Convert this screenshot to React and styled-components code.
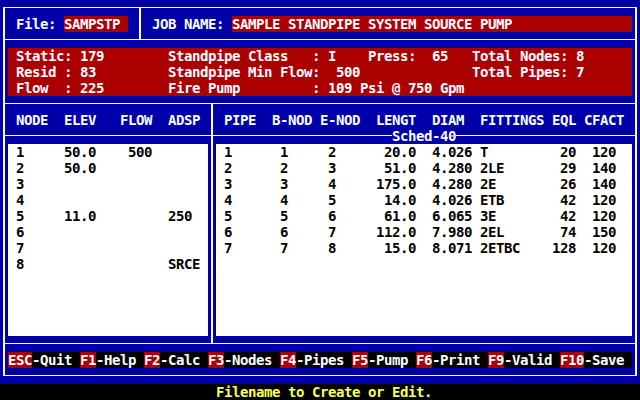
import React from "react";
import styled, { createGlobalStyle } from "styled-components";

const BLUE = "#0000aa";
const RED = "#aa0000";
const WHITE = "#ffffff";
const CH = 8;

const GlobalStyle = createGlobalStyle`
  html, body {
    margin: 0;
    padding: 0;
    background: ${BLUE};
  }
  * {
    box-sizing: border-box;
  }
`;

const leftCols = [{ w: 6 }, { w: 7 }, { w: 6, pad: 4 }, { w: 4 }];
const leftHead = ["NODE", "ELEV", "FLOW", "ADSP"];
const nodes = [
  ["1", "50.0", "500", ""],
  ["2", "50.0", "", ""],
  ["3", "", "", ""],
  ["4", "", "", ""],
  ["5", "11.0", "", "250"],
  ["6", "", "", ""],
  ["7", "", "", ""],
  ["8", "", "", "SRCE"],
];

const rightCols = [
  { w: 6 },
  { w: 6, pad: 2 },
  { w: 5, pad: 2 },
  { w: 7, pad: 7 },
  { w: 8, pad: 7 },
  { w: 8 },
  { w: 5, pad: 4 },
  { w: 5, pad: 4 },
];
const rightHead = ["PIPE", "B-NOD", "E-NOD", "  LENGT", "  DIAM", "FITTINGS", " EQL", "CFACT"];
const pipes = [
  ["1", "1", "2", "20.0", "4.026", "T", "20", "120"],
  ["2", "2", "3", "51.0", "4.280", "2LE", "29", "140"],
  ["3", "3", "4", "175.0", "4.280", "2E", "26", "140"],
  ["4", "4", "5", "14.0", "4.026", "ETB", "42", "120"],
  ["5", "5", "6", "61.0", "6.065", "3E", "42", "120"],
  ["6", "6", "7", "112.0", "7.980", "2EL", "74", "150"],
  ["7", "7", "8", "15.0", "8.071", "2ETBC", "128", "120"],
];

const keys = [
  ["ESC", "-Quit"],
  ["F1", "-Help"],
  ["F2", "-Calc"],
  ["F3", "-Nodes"],
  ["F4", "-Pipes"],
  ["F5", "-Pump"],
  ["F6", "-Print"],
  ["F9", "-Valid"],
  ["F10", "-Save"],
];

const Screen = styled.div`
  width: 640px;
  height: 400px;
  background: ${BLUE};
  color: ${WHITE};
  font-family: "DejaVu Sans Mono", "Liberation Mono", monospace;
  font-weight: bold;
  font-size: 14px;
  letter-spacing: -0.43px;
  line-height: 16px;
  white-space: pre;
  display: flex;
  flex-direction: column;
  overflow: hidden;
`;

const Frame = styled.div`
  margin: 7px 3px 8px;
  height: 369px;
  border: solid ${WHITE};
  border-width: 1px 2px;
  display: flex;
  flex-direction: column;
`;

const HeaderRow = styled.div`
  display: flex;
  height: 32px;
  border-bottom: 1px solid ${WHITE};
`;

const FileCell = styled.div`
  width: 136px;
  border-right: 2px solid ${WHITE};
  padding: 8px 0 0 11px;
  display: flex;
`;

const JobCell = styled.div`
  flex: 1;
  padding: 8px 3px 0 11px;
  display: flex;
`;

const Field = styled.span`
  background: ${RED};
  height: 16px;
  width: ${(p) => (p.$chars ? `${p.$chars * CH}px` : "auto")};
  flex: ${(p) => (p.$chars ? "none" : 1)};
`;

const InfoArea = styled.div`
  height: 64px;
  padding: 8px 3px 7px;
  border-bottom: 1px solid ${WHITE};
`;

const InfoBlock = styled.div`
  background: ${RED};
  height: 48px;
  padding-left: ${CH}px;
  display: grid;
  grid-template-columns: ${19 * CH}px ${38 * CH}px 1fr;
`;

const InfoColumn = styled.div`
  display: flex;
  flex-direction: column;
`;

const Middle = styled.div`
  display: flex;
  height: 240px;
  border-bottom: 1px solid ${WHITE};
`;

const Panel = styled.div`
  width: ${(p) => (p.$width ? `${p.$width}px` : "auto")};
  flex: ${(p) => (p.$width ? "none" : 1)};
  border-right: ${(p) => (p.$divider ? `2px solid ${WHITE}` : "none")};
  padding-top: 8px;
  display: flex;
  flex-direction: column;
`;

const TableRow = styled.div`
  display: grid;
  grid-template-columns: ${(p) => p.$cols.map((c) => `${c.w * CH}px`).join(" ")};
  height: 16px;
  padding-left: ${(p) => p.$indent}px;
`;

const Rule = styled.div`
  display: flex;
  height: 16px;
`;

const RuleLine = styled.div`
  flex: 1;
  height: 1px;
  margin-top: 7px;
  background: ${WHITE};
`;

const RuleLabel = styled.span`
  color: ${WHITE};
`;

const Sheet = styled.div`
  margin: 0 3px;
  height: 192px;
  background: ${WHITE};
  color: #000;
  display: flex;
  flex-direction: column;
`;

const Footer = styled.div`
  padding: 8px 3px 7px;
`;

const KeyBar = styled.div`
  display: flex;
  height: 16px;
  background: #000;
`;

const Key = styled.span`
  background: ${RED};
  color: ${WHITE};
`;

const KeyLabel = styled.span`
  color: ${WHITE};
`;

const StatusLine = styled.div`
  height: 16px;
  background: #000;
  color: #ffff55;
  padding-left: ${CH}px;
  text-align: center;
`;

const fmt = (col, v) => (col.pad ? v.padStart(col.pad) : v);

const Table = ({ cols, head, rows, rule }) => (
  <>
    <TableRow $cols={cols} $indent={11}>
      {head.map((h, i) => (
        <span key={i}>{h}</span>
      ))}
    </TableRow>
    <Rule>
      <RuleLine />
      {rule && <RuleLabel>{rule}</RuleLabel>}
      {rule && <RuleLine />}
    </Rule>
    <Sheet>
      {rows.map((r, i) => (
        <TableRow key={i} $cols={cols} $indent={8}>
          {r.map((v, j) => (
            <span key={j}>{v ? fmt(cols[j], v) : ""}</span>
          ))}
        </TableRow>
      ))}
    </Sheet>
  </>
);

export default function App() {
  return (
    <>
      <GlobalStyle />
      <Screen>
        <Frame>
          <HeaderRow>
            <FileCell>
              <span>File: </span>
              <Field $chars={8}>SAMPSTP</Field>
            </FileCell>
            <JobCell>
              <span>JOB NAME: </span>
              <Field>SAMPLE STANDPIPE SYSTEM SOURCE PUMP</Field>
            </JobCell>
          </HeaderRow>

          <InfoArea>
            <InfoBlock>
              <InfoColumn>
                <span>Static: 179</span>
                <span>Resid : 83</span>
                <span>Flow  : 225</span>
              </InfoColumn>
              <InfoColumn>
                <span>Standpipe Class   : I    Press:  65</span>
                <span>Standpipe Min Flow:  500</span>
                <span>Fire Pump         : 109 Psi @ 750 Gpm</span>
              </InfoColumn>
              <InfoColumn>
                <span>Total Nodes: 8</span>
                <span>Total Pipes: 7</span>
              </InfoColumn>
            </InfoBlock>
          </InfoArea>

          <Middle>
            <Panel $width={208} $divider>
              <Table cols={leftCols} head={leftHead} rows={nodes} />
            </Panel>
            <Panel>
              <Table cols={rightCols} head={rightHead} rows={pipes} rule="Sched-40" />
            </Panel>
          </Middle>

          <Footer>
            <KeyBar>
              {keys.map(([k, label], i) => (
                <React.Fragment key={k}>
                  <Key>{k}</Key>
                  <KeyLabel>{i < keys.length - 1 ? `${label} ` : label}</KeyLabel>
                </React.Fragment>
              ))}
            </KeyBar>
          </Footer>
        </Frame>
        <StatusLine>Filename to Create or Edit.</StatusLine>
      </Screen>
    </>
  );
}
